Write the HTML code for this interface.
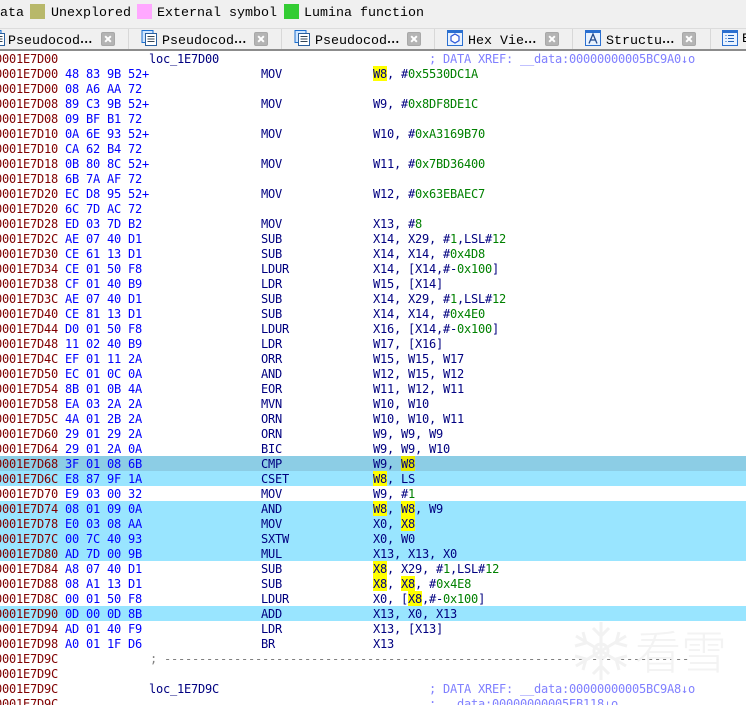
<!DOCTYPE html>
<html><head><meta charset="utf-8"><style>
html,body{margin:0;padding:0;background:#fff}
#p{position:relative;width:746px;height:705px;overflow:hidden;background:#fff}
.top{position:absolute;left:0;top:0;width:746px;height:50px;background:#f0f0f0}
.l{position:absolute;top:6px;height:16px;font:13.33px/16px "Liberation Mono",monospace;color:#000;white-space:pre}
.s{position:absolute;top:4px;width:15px;height:15px}
.t{position:absolute;top:32px;height:16px;font:13.33px/16px "Liberation Mono",monospace;color:#000;white-space:pre}
.e{font-family:"Noto Sans CJK JP",sans-serif;font-size:11px;letter-spacing:0;font-weight:700;position:relative;top:-1px}
.sep{position:absolute;top:29px;width:1px;height:20px;background:#d8d8d8}
.ln{position:absolute;left:0;width:746px}
.x{position:absolute;top:32px;width:14px;height:14px;background:#b4b4b4;border:1px solid #a8a8a8;box-sizing:border-box;border-radius:2px}
.x:before,.x:after{content:"";position:absolute;left:2px;top:5px;width:8px;height:2px;background:#fff;transform:rotate(45deg)}
.x:after{transform:rotate(-45deg)}
.ic{position:absolute;top:30px;width:16px;height:16px}
.r{position:absolute;left:0;width:746px;height:15px;font:12px/15px "DejaVu Sans Mono",monospace;letter-spacing:-.224px;white-space:pre}
.r i{position:absolute;top:1px;font-style:normal}
.a{left:-5px;color:#800000}
.h{left:65px;color:#0000ff}
.m{left:261px;color:#000080}
.o{left:373px;color:#000080}
.c{left:149px;color:#000080}
.k{left:429px;color:#8080ff}
.d{left:150px;color:#808080}
b{font-weight:400;color:#008000}
u{text-decoration:none;background:#ff0;display:inline-block;height:15px;line-height:17px;vertical-align:top;margin-top:-1px}
.hi{background:#99e5ff}
.hd{background:#8ccde5}
.hd u{background:#e5e500}
#wm{position:absolute;left:570px;top:620px;width:160px;height:62px}
#wm1,#wm2{position:absolute;top:620px;font:46px/60px "Noto Sans CJK SC",sans-serif;font-weight:300;color:#f3f3f3}
</style></head><body><div id="p">
<div class="top"></div>
<div class="ln" style="top:28px;height:1px;background:#dcdcdc"></div>
<div class="ln" style="top:49px;height:2px;background:#8c8c8c"></div>
<div class="l" style="left:-8px">Data</div>
<div class="s" style="left:30px;background:#b8b86a"></div><div class="l" style="left:51px">Unexplored</div>
<div class="s" style="left:137px;background:#ffa8ff"></div><div class="l" style="left:157px">External symbol</div>
<div class="s" style="left:284px;background:#33cc33"></div><div class="l" style="left:304px">Lumina function</div>

<svg class="ic" style="left:-11px" viewBox="0 0 16 16"><rect x="1" y="0.5" width="11" height="12" fill="#cfe6ff" stroke="#1b6fd0"/><rect x="4.5" y="3.5" width="11" height="12" fill="#fff" stroke="#2a5f9e"/><path d="M6.5 6.5h7M6.5 9h7M6.5 11.500h7" stroke="#345" /></svg>
<div class="t" style="left:8px">Pseudocod<span class="e">…</span></div><div class="x" style="left:101px"></div><div class="sep" style="left:128px"></div>
<svg class="ic" style="left:141px" viewBox="0 0 16 16"><rect x="1" y="0.5" width="11" height="12" fill="#cfe6ff" stroke="#1b6fd0"/><rect x="4.500" y="3.500" width="11" height="12" fill="#fff" stroke="#2a5f9e"/><path d="M6.500 6.500h7M6.500 9h7M6.500 11.500h7" stroke="#345"/></svg>
<div class="t" style="left:162px">Pseudocod<span class="e">…</span></div><div class="x" style="left:254px"></div><div class="sep" style="left:281px"></div>
<svg class="ic" style="left:294px" viewBox="0 0 16 16"><rect x="1" y="0.5" width="11" height="12" fill="#cfe6ff" stroke="#1b6fd0"/><rect x="4.500" y="3.500" width="11" height="12" fill="#fff" stroke="#2a5f9e"/><path d="M6.500 6.500h7M6.500 9h7M6.500 11.500h7" stroke="#345"/></svg>
<div class="t" style="left:315px">Pseudocod<span class="e">…</span></div><div class="x" style="left:407px"></div><div class="sep" style="left:434px"></div>
<svg class="ic" style="left:447px" viewBox="0 0 16 16"><rect x="0.500" y="0.500" width="15" height="15" fill="#e8f2ff" stroke="#2a6fd0"/><rect x="1" y="1" width="14" height="2" fill="#2a6fd0"/><path d="M8 4l4 2.300v4.400L8 13l-4-2.300V6.300z" fill="#fff" stroke="#2a55d8" stroke-width="1.200"/></svg>
<div class="t" style="left:468px">Hex Vie<span class="e">…</span></div><div class="x" style="left:545px"></div><div class="sep" style="left:572px"></div>
<svg class="ic" style="left:585px" viewBox="0 0 16 16"><rect x="0.500" y="0.500" width="15" height="15" fill="#e8f2ff" stroke="#2a6fd0"/><rect x="1" y="1" width="14" height="2" fill="#2a6fd0"/><path d="M4 13.500L8 4l4 9.500M5.500 10h5" fill="none" stroke="#234a8c" stroke-width="1.300"/></svg>
<div class="t" style="left:606px">Structu<span class="e">…</span></div><div class="x" style="left:682px"></div><div class="sep" style="left:710px"></div>
<svg class="ic" style="left:722px" viewBox="0 0 16 16"><rect x="0.500" y="0.500" width="15" height="15" fill="#e8f2ff" stroke="#2a6fd0"/><rect x="1" y="1" width="14" height="2" fill="#2a6fd0"/><path d="M6 5.500h6M6 8.500h6M6 11.500h6M3.500 5.500h1M3.500 8.500h1M3.500 11.500h1" stroke="#1d5fb8"/></svg>
<div class="t" style="left:742px">E</div>

<div class="r" style="top:51px"><i class="a">0001E7D00</i><i class="c">loc_1E7D00</i><i class="k">; DATA XREF: __data:00000000005BC9A0↓o</i></div>
<div class="r" style="top:66px"><i class="a">0001E7D00</i><i class="h">48 83 9B 52+</i><i class="m">MOV</i><i class="o"><u>W8</u>, #<b>0x5530DC1A</b></i></div>
<div class="r" style="top:81px"><i class="a">0001E7D00</i><i class="h">08 A6 AA 72</i></div>
<div class="r" style="top:96px"><i class="a">0001E7D08</i><i class="h">89 C3 9B 52+</i><i class="m">MOV</i><i class="o">W9, #<b>0x8DF8DE1C</b></i></div>
<div class="r" style="top:111px"><i class="a">0001E7D08</i><i class="h">09 BF B1 72</i></div>
<div class="r" style="top:126px"><i class="a">0001E7D10</i><i class="h">0A 6E 93 52+</i><i class="m">MOV</i><i class="o">W10, #<b>0xA3169B70</b></i></div>
<div class="r" style="top:141px"><i class="a">0001E7D10</i><i class="h">CA 62 B4 72</i></div>
<div class="r" style="top:156px"><i class="a">0001E7D18</i><i class="h">0B 80 8C 52+</i><i class="m">MOV</i><i class="o">W11, #<b>0x7BD36400</b></i></div>
<div class="r" style="top:171px"><i class="a">0001E7D18</i><i class="h">6B 7A AF 72</i></div>
<div class="r" style="top:186px"><i class="a">0001E7D20</i><i class="h">EC D8 95 52+</i><i class="m">MOV</i><i class="o">W12, #<b>0x63EBAEC7</b></i></div>
<div class="r" style="top:201px"><i class="a">0001E7D20</i><i class="h">6C 7D AC 72</i></div>
<div class="r" style="top:216px"><i class="a">0001E7D28</i><i class="h">ED 03 7D B2</i><i class="m">MOV</i><i class="o">X13, #<b>8</b></i></div>
<div class="r" style="top:231px"><i class="a">0001E7D2C</i><i class="h">AE 07 40 D1</i><i class="m">SUB</i><i class="o">X14, X29, #<b>1</b>,LSL#<b>12</b></i></div>
<div class="r" style="top:246px"><i class="a">0001E7D30</i><i class="h">CE 61 13 D1</i><i class="m">SUB</i><i class="o">X14, X14, #<b>0x4D8</b></i></div>
<div class="r" style="top:261px"><i class="a">0001E7D34</i><i class="h">CE 01 50 F8</i><i class="m">LDUR</i><i class="o">X14, [X14,#-<b>0x100</b>]</i></div>
<div class="r" style="top:276px"><i class="a">0001E7D38</i><i class="h">CF 01 40 B9</i><i class="m">LDR</i><i class="o">W15, [X14]</i></div>
<div class="r" style="top:291px"><i class="a">0001E7D3C</i><i class="h">AE 07 40 D1</i><i class="m">SUB</i><i class="o">X14, X29, #<b>1</b>,LSL#<b>12</b></i></div>
<div class="r" style="top:306px"><i class="a">0001E7D40</i><i class="h">CE 81 13 D1</i><i class="m">SUB</i><i class="o">X14, X14, #<b>0x4E0</b></i></div>
<div class="r" style="top:321px"><i class="a">0001E7D44</i><i class="h">D0 01 50 F8</i><i class="m">LDUR</i><i class="o">X16, [X14,#-<b>0x100</b>]</i></div>
<div class="r" style="top:336px"><i class="a">0001E7D48</i><i class="h">11 02 40 B9</i><i class="m">LDR</i><i class="o">W17, [X16]</i></div>
<div class="r" style="top:351px"><i class="a">0001E7D4C</i><i class="h">EF 01 11 2A</i><i class="m">ORR</i><i class="o">W15, W15, W17</i></div>
<div class="r" style="top:366px"><i class="a">0001E7D50</i><i class="h">EC 01 0C 0A</i><i class="m">AND</i><i class="o">W12, W15, W12</i></div>
<div class="r" style="top:381px"><i class="a">0001E7D54</i><i class="h">8B 01 0B 4A</i><i class="m">EOR</i><i class="o">W11, W12, W11</i></div>
<div class="r" style="top:396px"><i class="a">0001E7D58</i><i class="h">EA 03 2A 2A</i><i class="m">MVN</i><i class="o">W10, W10</i></div>
<div class="r" style="top:411px"><i class="a">0001E7D5C</i><i class="h">4A 01 2B 2A</i><i class="m">ORN</i><i class="o">W10, W10, W11</i></div>
<div class="r" style="top:426px"><i class="a">0001E7D60</i><i class="h">29 01 29 2A</i><i class="m">ORN</i><i class="o">W9, W9, W9</i></div>
<div class="r" style="top:441px"><i class="a">0001E7D64</i><i class="h">29 01 2A 0A</i><i class="m">BIC</i><i class="o">W9, W9, W10</i></div>
<div class="r hd" style="top:456px"><i class="a">0001E7D68</i><i class="h">3F 01 08 6B</i><i class="m">CMP</i><i class="o">W9, <u>W8</u></i></div>
<div class="r hi" style="top:471px"><i class="a">0001E7D6C</i><i class="h">E8 87 9F 1A</i><i class="m">CSET</i><i class="o"><u>W8</u>, LS</i></div>
<div class="r" style="top:486px"><i class="a">0001E7D70</i><i class="h">E9 03 00 32</i><i class="m">MOV</i><i class="o">W9, #<b>1</b></i></div>
<div class="r hi" style="top:501px"><i class="a">0001E7D74</i><i class="h">08 01 09 0A</i><i class="m">AND</i><i class="o"><u>W8</u>, <u>W8</u>, W9</i></div>
<div class="r hi" style="top:516px"><i class="a">0001E7D78</i><i class="h">E0 03 08 AA</i><i class="m">MOV</i><i class="o">X0, <u>X8</u></i></div>
<div class="r hi" style="top:531px"><i class="a">0001E7D7C</i><i class="h">00 7C 40 93</i><i class="m">SXTW</i><i class="o">X0, W0</i></div>
<div class="r hi" style="top:546px"><i class="a">0001E7D80</i><i class="h">AD 7D 00 9B</i><i class="m">MUL</i><i class="o">X13, X13, X0</i></div>
<div class="r" style="top:561px"><i class="a">0001E7D84</i><i class="h">A8 07 40 D1</i><i class="m">SUB</i><i class="o"><u>X8</u>, X29, #<b>1</b>,LSL#<b>12</b></i></div>
<div class="r" style="top:576px"><i class="a">0001E7D88</i><i class="h">08 A1 13 D1</i><i class="m">SUB</i><i class="o"><u>X8</u>, <u>X8</u>, #<b>0x4E8</b></i></div>
<div class="r" style="top:591px"><i class="a">0001E7D8C</i><i class="h">00 01 50 F8</i><i class="m">LDUR</i><i class="o">X0, [<u>X8</u>,#-<b>0x100</b>]</i></div>
<div class="r hi" style="top:606px"><i class="a">0001E7D90</i><i class="h">0D 00 0D 8B</i><i class="m">ADD</i><i class="o">X13, X0, X13</i></div>
<div class="r" style="top:621px"><i class="a">0001E7D94</i><i class="h">AD 01 40 F9</i><i class="m">LDR</i><i class="o">X13, [X13]</i></div>
<div class="r" style="top:636px"><i class="a">0001E7D98</i><i class="h">A0 01 1F D6</i><i class="m">BR</i><i class="o">X13</i></div>
<div class="r" style="top:651px"><i class="a">0001E7D9C</i><i class="d">; ---------------------------------------------------------------------------</i></div>
<div class="r" style="top:666px"><i class="a">0001E7D9C</i></div>
<div class="r" style="top:681px"><i class="a">0001E7D9C</i><i class="c">loc_1E7D9C</i><i class="k">; DATA XREF: __data:00000000005BC9A8↓o</i></div>
<div class="r" style="top:696px"><i class="a">0001E7D9C</i><i class="k">; __data:00000000005EB118↓o</i></div>

<svg id="wm" viewBox="0 0 160 62"><g stroke="#f2f2f2" stroke-width="3" fill="none"><path d="M31 2v58M6 16l50 30M6 46l50-30"/><path d="M23 8l8 8 8-8M23 54l8-8 8 8M5 26l11-3-3-11M57 36l-11 3 3 11M57 26l-11-3 3-11M5 36l11 3-3 11"/><circle cx="31" cy="31" r="7"/></g></svg>
<div id="wm1" style="left:635px">看</div><div id="wm2" style="left:681px">雪</div>
</div></body></html>
